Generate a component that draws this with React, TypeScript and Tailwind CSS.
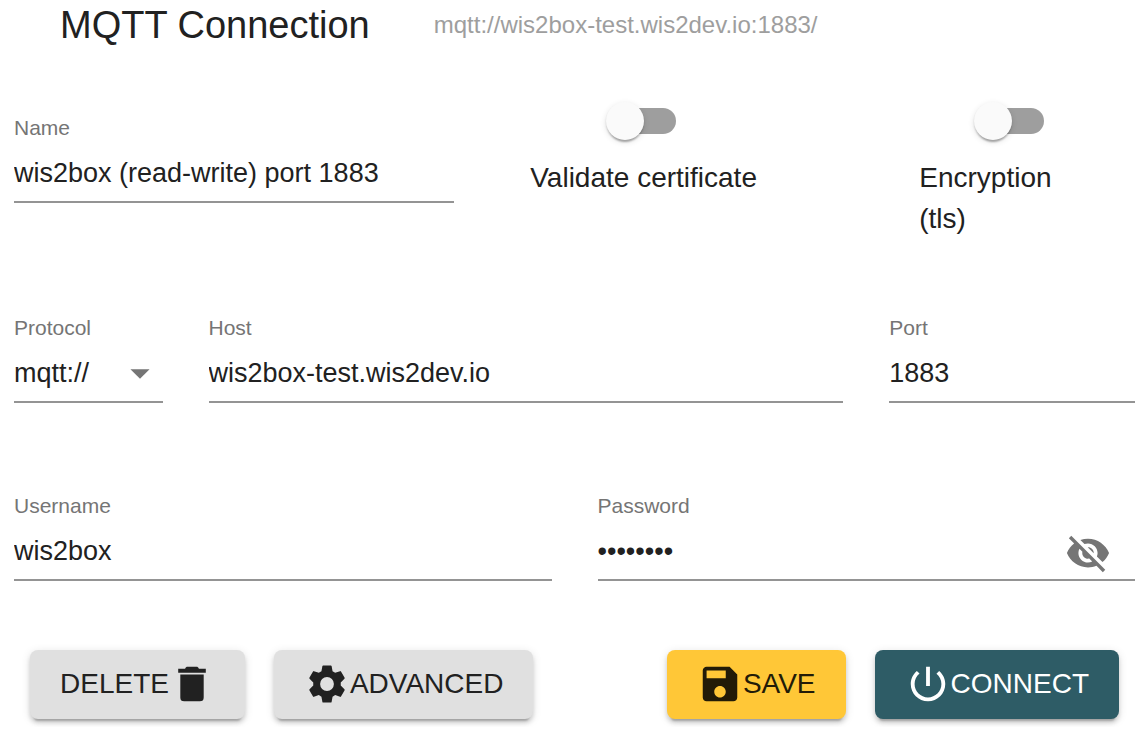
import { useState } from "react";
import type { ReactNode } from "react";
import clsx from "clsx";

const ICONS = {
  trash:
    "M5.9 7h12.2v12a2 2 0 0 1-2 2H7.9a2 2 0 0 1-2-2zM19.2 4h-3.6c-.3-.7-.7-1-1.3-1H9.7c-.6 0-1 .3-1.3 1H4.8v2.1h14.4z",
  gear: "M9.1 5.4L9.6 2.6Q9.7 2.3 10 2.3H14Q14.3 2.3 14.4 2.6L14.9 5.4 16.27 6.19 18.8 5.3Q19.1 5.2 19.3 5.5L21.2 8.8Q21.3 9.1 21.1 9.3L19.17 11.2V12.8L21.1 14.7Q21.3 14.9 21.2 15.2L19.3 18.5Q19.1 18.8 18.8 18.7L16.27 17.8 14.9 18.6 14.4 21.4Q14.3 21.7 14 21.7H10Q9.7 21.7 9.6 21.4L9.1 18.6 7.73 17.8 5.2 18.7Q4.9 18.8 4.7 18.5L2.8 15.2Q2.7 14.9 2.9 14.7L4.83 12.8V11.2L2.9 9.3Q2.7 9.1 2.8 8.8L4.7 5.5Q4.9 5.2 5.2 5.3L7.73 6.19zM12 8.4a3.6 3.6 0 1 0 0 7.2 3.6 3.6 0 0 0 0-7.2z",
  save: "M17 3H5c-1.11 0-2 .9-2 2v14c0 1.1.89 2 2 2h14c1.1 0 2-.9 2-2V7l-4-4zm-5 16c-1.66 0-3-1.34-3-3s1.34-3 3-3 3 1.34 3 3-1.34 3-3 3zm3-10H5V5h10v4z",
  power:
    "M13 3h-2v10h2V3zm4.83 2.17l-1.42 1.42C17.99 7.86 19 9.81 19 12c0 3.87-3.13 7-7 7s-7-3.13-7-7c0-2.19 1.01-4.14 2.58-5.42L6.17 5.17C4.23 6.82 3 9.26 3 12c0 4.97 4.03 9 9 9s9-4.03 9-9c0-2.74-1.23-5.18-3.17-6.83z",
  eyeOff:
    "M12 7c2.76 0 5 2.24 5 5 0 .65-.13 1.26-.36 1.83l2.92 2.92c1.51-1.26 2.7-2.89 3.43-4.75-1.73-4.39-6-7.5-11-7.5-1.4 0-2.74.25-3.98.7l2.16 2.16C10.74 7.13 11.35 7 12 7zM2 4.27l2.28 2.28.46.46C3.08 8.3 1.78 10.02 1 12c1.73 4.39 6 7.5 11 7.5 1.55 0 3.03-.3 4.38-.84l.42.42L19.73 22 21 20.73 3.27 3 2 4.27zM7.53 9.8l1.55 1.55c-.05.21-.08.43-.08.65 0 1.66 1.34 3 3 3 .22 0 .44-.03.65-.08l1.55 1.55c-.67.33-1.41.53-2.2.53-2.76 0-5-2.24-5-5 0-.79.2-1.53.53-2.2zm4.31-.78l3.15 3.15.02-.16c0-1.66-1.34-3-3-3l-.17.01z",
  eye: "M12 4.5C7 4.5 2.73 7.61 1 12c1.73 4.39 6 7.5 11 7.5s9.27-3.11 11-7.5c-1.73-4.39-6-7.5-11-7.5zM12 17c-2.76 0-5-2.24-5-5s2.24-5 5-5 5 2.24 5 5-2.24 5-5 5zm0-8c-1.66 0-3 1.34-3 3s1.34 3 3 3 3-1.34 3-3-1.34-3-3-3z",
  arrowDown: "M7 10l5 5 5-5z",
};

function Icon({ name, className }: { name: keyof typeof ICONS; className?: string }) {
  return (
    <svg
      viewBox="0 0 24 24"
      fill="currentColor"
      aria-hidden="true"
      className={clsx("size-[46px] shrink-0", className)}
    >
      <path d={ICONS[name]} />
    </svg>
  );
}

interface FieldProps {
  id: string;
  label: string;
  className: string;
  children: ReactNode;
}

// Small label on top, underlined control below
function Field({ id, label, className, children }: FieldProps) {
  return (
    <div className={className}>
      <label htmlFor={id} className="block text-[21px] leading-6 text-[#757575]">
        {label}
      </label>
      <div className="relative mt-1 flex items-center border-b-2 border-[#949494]">
        {children}
      </div>
    </div>
  );
}

const controlClass =
  "h-[57px] w-full min-w-0 flex-1 appearance-none bg-transparent pt-0.5 text-[27px] outline-none";

function Switch({ id, label }: { id: string; label: string }) {
  return (
    <div className="mx-[30px] flex w-fit flex-col items-center pt-3">
      <input
        id={id}
        type="checkbox"
        role="switch"
        className="relative h-[26px] w-16 cursor-pointer appearance-none rounded-full bg-[#9e9e9e] before:absolute before:-left-1.5 before:-top-1.5 before:size-[38px] before:rounded-full before:bg-[#fafafa] before:shadow-[0_4px_2px_-2px_rgba(0,0,0,0.2),0_2px_2px_rgba(0,0,0,0.14),0_2px_6px_rgba(0,0,0,0.12)] checked:before:left-8"
      />
      <label htmlFor={id} className="mt-[23px] text-[28px] leading-[41px]">
        {label}
      </label>
    </div>
  );
}

function ActionButton({ className, children }: { className: string; children: ReactNode }) {
  return (
    <button
      type="button"
      className={clsx(
        "flex h-[69px] cursor-pointer items-center rounded-lg px-[30px] pb-0.5 text-[28px] uppercase shadow-[0_6px_2px_-4px_rgba(0,0,0,0.2),0_4px_4px_rgba(0,0,0,0.14),0_2px_10px_rgba(0,0,0,0.12)]",
        className,
      )}
    >
      {children}
    </button>
  );
}

export default function App() {
  const [showPassword, setShowPassword] = useState(false);

  return (
    <main className="bg-white pb-2 pl-3.5 pr-3 font-['Liberation_Sans',Arial,sans-serif] text-[#212121]">
      <header className="flex items-center gap-16 pl-[46px]">
        <h1 className="text-[38px] leading-[48px]">MQTT Connection</h1>
        <p className="text-[24px] leading-[50px] text-[#9e9e9e]">
          mqtt://wis2box-test.wis2dev.io:1883/
        </p>
      </header>

      <form>
        <div className="mt-[46px] grid grid-cols-12 gap-x-[46px]">
          <Field id="name" label="Name" className="col-span-5 pt-5">
            <input
              id="name"
              type="text"
              defaultValue="wis2box (read-write) port 1883"
              className={controlClass}
            />
          </Field>
          <div className="col-span-4">
            <Switch id="validate" label="Validate certificate" />
          </div>
          <div className="col-span-3">
            <Switch id="tls" label="Encryption (tls)" />
          </div>
        </div>

        <div className="mt-[77px] grid grid-cols-12 gap-x-[46px]">
          <Field id="protocol" label="Protocol" className="col-span-2">
            <select id="protocol" defaultValue="mqtt" className={controlClass}>
              <option value="mqtt">mqtt://</option>
              <option value="ws">ws://</option>
            </select>
            <Icon
              name="arrowDown"
              className="pointer-events-none absolute right-0 text-[#757575]"
            />
          </Field>
          <Field id="host" label="Host" className="col-span-7">
            <input
              id="host"
              type="text"
              defaultValue="wis2box-test.wis2dev.io"
              className={controlClass}
            />
          </Field>
          <Field id="port" label="Port" className="col-span-3">
            <input id="port" type="text" defaultValue="1883" className={controlClass} />
          </Field>
        </div>

        <div className="mt-[91px] grid grid-cols-12 gap-x-[46px]">
          <Field id="username" label="Username" className="col-span-6">
            <input id="username" type="text" defaultValue="wis2box" className={controlClass} />
          </Field>
          <Field id="password" label="Password" className="col-span-6">
            <input
              id="password"
              type={showPassword ? "text" : "password"}
              defaultValue="password"
              className={controlClass}
            />
            <button
              type="button"
              aria-label="Toggle password visibility"
              onClick={() => setShowPassword(!showPassword)}
              className="mr-6 cursor-pointer pt-1 text-[#757575]"
            >
              <Icon name={showPassword ? "eye" : "eyeOff"} />
            </button>
          </Field>
        </div>

        <div className="mt-[69px] flex justify-between px-4">
          <div className="flex gap-[29px]">
            <ActionButton className="bg-[#e0e0e0]">
              Delete
              <Icon name="trash" />
            </ActionButton>
            <ActionButton className="bg-[#e0e0e0]">
              <Icon name="gear" />
              Advanced
            </ActionButton>
          </div>
          <div className="flex gap-[29px]">
            <ActionButton className="bg-[#ffc737] text-[#221b07]">
              <Icon name="save" />
              Save
            </ActionButton>
            <ActionButton className="bg-[#2e5c66] text-white">
              <Icon name="power" />
              Connect
            </ActionButton>
          </div>
        </div>
      </form>
    </main>
  );
}
